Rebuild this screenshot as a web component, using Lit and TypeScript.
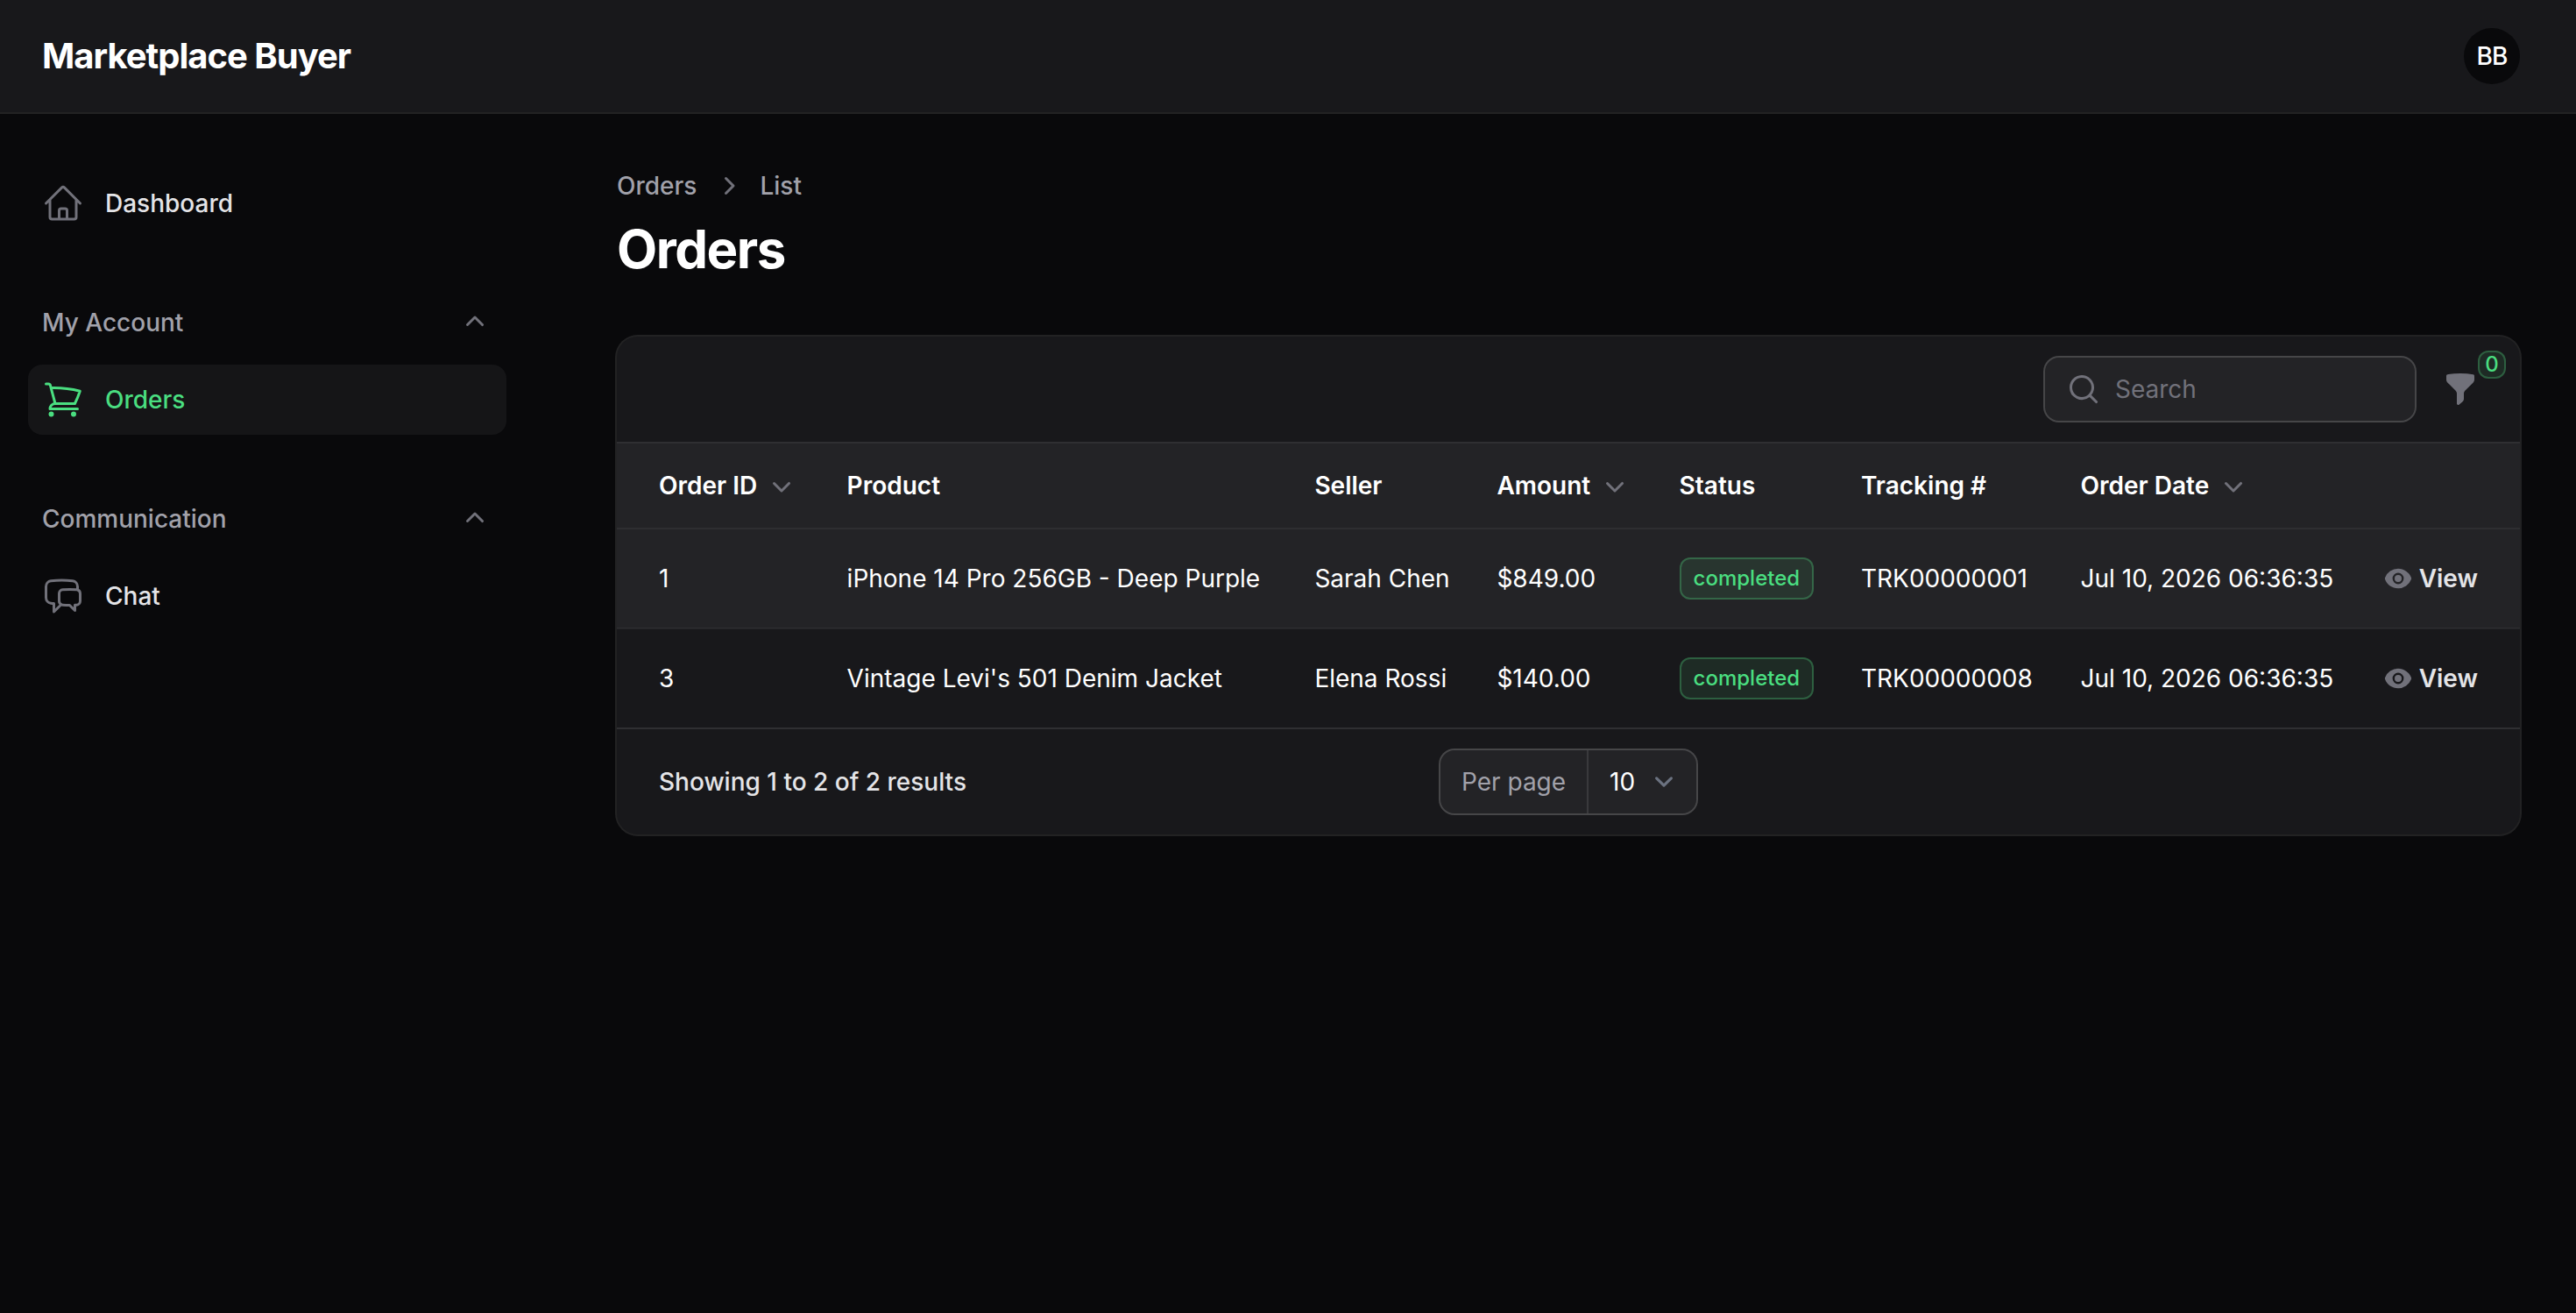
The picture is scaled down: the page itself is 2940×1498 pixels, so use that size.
import { LitElement, html, svg, css } from "lit";
import { customElement } from "lit/decorators.js";

interface Order {
  id: string;
  product: string;
  seller: string;
  amount: string;
  status: string;
  tracking: string;
  date: string;
  active: boolean;
}

const orders: Order[] = [
  {
    id: "1",
    product: "iPhone 14 Pro 256GB - Deep Purple",
    seller: "Sarah Chen",
    amount: "$849.00",
    status: "completed",
    tracking: "TRK00000001",
    date: "Jul 10, 2026 06:36:35",
    active: true,
  },
  {
    id: "3",
    product: "Vintage Levi's 501 Denim Jacket",
    seller: "Elena Rossi",
    amount: "$140.00",
    status: "completed",
    tracking: "TRK00000008",
    date: "Jul 10, 2026 06:36:35",
    active: false,
  },
];

const columns = [
  { label: "Order ID", sortable: true },
  { label: "Product", sortable: false },
  { label: "Seller", sortable: false },
  { label: "Amount", sortable: true },
  { label: "Status", sortable: false },
  { label: "Tracking #", sortable: false },
  { label: "Order Date", sortable: true },
];

const outline = (d: string) => html`<svg class="icon lg" viewBox="0 0 24 24" fill="none" stroke="currentColor"
  stroke-width="1.5" stroke-linecap="round" stroke-linejoin="round">${svg`<path d=${d}></path>`}</svg>`;

const solid = (d: string, size = "md") => html`<svg class="icon ${size}" viewBox="0 0 20 20"
  fill="currentColor">${svg`<path fill-rule="evenodd" clip-rule="evenodd" d=${d}></path>`}</svg>`;

const HOME =
  "m2.25 12 8.954-8.955c.44-.439 1.152-.439 1.591 0L21.75 12M4.5 9.75v10.125c0 .621.504 1.125 1.125 1.125H9.75v-4.875c0-.621.504-1.125 1.125-1.125h2.25c.621 0 1.125.504 1.125 1.125V21h4.125c.621 0 1.125-.504 1.125-1.125V9.75M8.25 21h8.25";
const CART =
  "M2.25 3h1.386c.51 0 .955.343 1.087.835l.383 1.437M7.5 14.25a3 3 0 0 0-3 3h15.75m-12.75-3h11.218c1.121-2.3 2.1-4.684 2.924-7.138a60.114 60.114 0 0 0-16.536-1.84M7.5 14.25 5.106 5.272M6 20.25a.75.75 0 1 1-1.5 0 .75.75 0 0 1 1.5 0Zm12.75 0a.75.75 0 1 1-1.5 0 .75.75 0 0 1 1.5 0Z";
const CHAT =
  "M20.25 8.511c.884.284 1.5 1.128 1.5 2.097v4.286c0 1.136-.847 2.1-1.98 2.193-.34.027-.68.052-1.02.072v3.091l-3-3c-1.354 0-2.694-.055-4.02-.163a2.115 2.115 0 0 1-.825-.242m9.345-8.334a2.126 2.126 0 0 0-.476-.095 48.64 48.64 0 0 0-8.048 0c-1.131.094-1.976 1.057-1.976 2.192v4.286c0 .837.46 1.58 1.155 1.951m9.345-8.334V6.637c0-1.621-1.152-3.026-2.76-3.235A48.455 48.455 0 0 0 11.25 3c-2.115 0-4.198.137-6.24.402-1.608.209-2.76 1.614-2.76 3.235v6.226c0 1.621 1.152 3.026 2.76 3.235.577.075 1.157.14 1.74.194V21l4.155-4.155";
const CHEVRON_UP =
  "M9.47 6.47a.75.75 0 0 1 1.06 0l4.25 4.25a.75.75 0 1 1-1.06 1.06L10 8.06l-3.72 3.72a.75.75 0 0 1-1.06-1.06l4.25-4.25Z";
const CHEVRON_DOWN =
  "M5.22 8.22a.75.75 0 0 1 1.06 0L10 11.94l3.72-3.72a.75.75 0 1 1 1.06 1.06l-4.25 4.25a.75.75 0 0 1-1.06 0L5.22 9.28a.75.75 0 0 1 0-1.06Z";
const CHEVRON_RIGHT =
  "M8.22 5.22a.75.75 0 0 1 1.06 0l4.25 4.25a.75.75 0 0 1 0 1.06l-4.25 4.25a.75.75 0 0 1-1.06-1.06L11.94 10 8.22 6.28a.75.75 0 0 1 0-1.06Z";
const SEARCH =
  "M9 3.5a5.5 5.5 0 1 0 0 11 5.5 5.5 0 0 0 0-11ZM2 9a7 7 0 1 1 12.452 4.391l3.328 3.329a.75.75 0 1 1-1.06 1.06l-3.329-3.328A7 7 0 0 1 2 9Z";
const FUNNEL =
  "M2.628 1.601C5.028 1.206 7.49 1 10 1s4.973.206 7.372.601a.75.75 0 0 1 .628.74v2.288a2.25 2.25 0 0 1-.659 1.59l-4.682 4.683a2.25 2.25 0 0 0-.659 1.59v3.037c0 .684-.31 1.33-.844 1.757l-1.937 1.55A.75.75 0 0 1 8 18.25v-5.757a2.25 2.25 0 0 0-.659-1.591L2.659 6.22A2.25 2.25 0 0 1 2 4.629V2.34a.75.75 0 0 1 .628-.74Z";
const EYE =
  "M10 12.5a2.5 2.5 0 1 0 0-5 2.5 2.5 0 0 0 0 5ZM.664 10.59a1.651 1.651 0 0 1 0-1.186A10.004 10.004 0 0 1 10 3c4.257 0 7.893 2.66 9.336 6.41.147.381.146.804 0 1.186A10.004 10.004 0 0 1 10 17c-4.257 0-7.893-2.66-9.336-6.41ZM14 10a4 4 0 1 1-8 0 4 4 0 0 1 8 0Z";

@customElement("app-root")
export class AppRoot extends LitElement {
  static styles = css`
    :host {
      display: flex;
      flex-direction: column;
      box-sizing: border-box;
      min-height: 100vh;
      background: #09090b;
      color: #fff;
      font-family: Inter, "Liberation Sans", sans-serif;
      font-size: 28px;
      line-height: 40px;
      -webkit-font-smoothing: antialiased;
    }
    * {
      box-sizing: border-box;
    }
    .icon {
      display: block;
      flex: none;
      color: #71717a;
    }
    .sm {
      width: 32px;
      height: 32px;
    }
    .md {
      width: 40px;
      height: 40px;
    }
    .lg {
      width: 48px;
      height: 48px;
    }
    .topbar {
      display: flex;
      align-items: center;
      justify-content: space-between;
      height: 128px;
      padding: 0 64px 0 48px;
      background: #18181b;
      box-shadow: 0 0 0 2px rgba(255, 255, 255, 0.1);
    }
    .brand {
      font-size: 40px;
      font-weight: 700;
      letter-spacing: -0.025em;
    }
    .avatar {
      display: flex;
      align-items: center;
      justify-content: center;
      width: 64px;
      height: 64px;
      border-radius: 50%;
      background: #09090b;
      font-size: 28px;
      font-weight: 500;
      letter-spacing: -0.03em;
    }
    .body {
      display: flex;
      flex: 1;
    }
    .sidebar {
      display: flex;
      flex-direction: column;
      gap: 56px;
      width: 640px;
      padding: 64px 62px 64px 32px;
    }
    .group {
      display: flex;
      flex-direction: column;
      gap: 8px;
    }
    .group-head,
    .item {
      display: flex;
      align-items: center;
      height: 80px;
      padding: 16px;
      font-weight: 500;
    }
    .group-head {
      justify-content: space-between;
      color: #a1a1aa;
    }
    .item {
      gap: 24px;
      border-radius: 16px;
      color: #e4e4e7;
    }
    .item.active {
      background: rgba(255, 255, 255, 0.05);
      color: #4ade80;
    }
    .item.active .icon {
      color: #4ade80;
    }
    .main {
      flex: 1;
      min-width: 0;
      padding: 64px;
    }
    .crumbs {
      display: flex;
      gap: 16px;
      font-weight: 500;
      color: #a1a1aa;
    }
    .title {
      margin: 16px 0 64px;
      font-size: 60px;
      line-height: 72px;
      font-weight: 700;
      letter-spacing: -0.025em;
    }
    .card {
      border-radius: 24px;
      background: #18181b;
      box-shadow: 0 0 0 2px rgba(255, 255, 255, 0.1);
    }
    .toolbar {
      display: flex;
      justify-content: flex-end;
      align-items: center;
      gap: 32px;
      padding: 24px 48px;
    }
    .search {
      display: flex;
      align-items: center;
      gap: 16px;
      width: 422px;
      height: 72px;
      padding: 0 24px;
      border-radius: 16px;
      background: rgba(255, 255, 255, 0.05);
      box-shadow: 0 0 0 2px rgba(255, 255, 255, 0.2);
      color: #71717a;
    }
    .filter {
      position: relative;
    }
    .count {
      position: absolute;
      top: -24px;
      left: 40px;
      width: 32px;
      height: 32px;
      border-radius: 12px;
      text-align: center;
      font-size: 24px;
      line-height: 32px;
      font-weight: 500;
    }
    .count,
    .badge {
      color: #4ade80;
      background: rgba(84, 216, 128, 0.1);
      box-shadow: inset 0 0 0 2px rgba(84, 216, 128, 0.3);
    }
    .row {
      display: grid;
      grid-template-columns: 214.6px 533.8px 208px 208.2px 207.4px 250.6px 345px 1fr;
      align-items: center;
      height: 114px;
      padding: 0 48px;
      border-top: 2px solid rgba(255, 255, 255, 0.05);
      white-space: nowrap;
    }
    .row.head {
      height: 98px;
      font-weight: 600;
      border-top-color: rgba(255, 255, 255, 0.1);
      background-clip: padding-box;
    }
    .row.head,
    .row.hover {
      background-color: rgba(255, 255, 255, 0.05);
    }
    .row.hover {
      box-shadow: 0 1px 0 rgba(255, 255, 255, 0.05);
    }
    .sort {
      display: flex;
      align-items: center;
      gap: 8px;
    }
    .badge {
      justify-self: start;
      height: 48px;
      padding: 0 16px;
      border-radius: 12px;
      font-size: 24px;
      line-height: 48px;
      font-weight: 500;
    }
    .view {
      display: flex;
      align-items: center;
      justify-content: flex-end;
      gap: 8px;
      font-weight: 600;
      color: #e4e4e7;
    }
    .footer {
      display: grid;
      grid-template-columns: 1fr auto 1fr;
      align-items: center;
      padding: 24px 48px;
      border-top: 2px solid rgba(255, 255, 255, 0.1);
    }
    .summary {
      font-weight: 500;
      color: #e4e4e7;
    }
    .perpage {
      display: flex;
      width: 292px;
      height: 72px;
      border-radius: 16px;
      background: rgba(255, 255, 255, 0.05);
      box-shadow: 0 0 0 2px rgba(255, 255, 255, 0.2);
      line-height: 72px;
    }
    .perpage-label {
      padding: 0 24px;
      border-right: 2px solid rgba(255, 255, 255, 0.1);
      color: #a1a1aa;
    }
    .select {
      display: flex;
      flex: 1;
      align-items: center;
      justify-content: space-between;
      padding: 0 16px 0 24px;
    }
    .caret {
      width: 42px;
      height: 42px;
    }
  `;

  private group(label: string, item: unknown) {
    return html`<div class="group">
      <div class="group-head"><span>${label}</span>${solid(CHEVRON_UP)}</div>
      ${item}
    </div>`;
  }

  render() {
    return html`
      <header class="topbar">
        <div class="brand">Marketplace Buyer</div>
        <div class="avatar">BB</div>
      </header>
      <div class="body">
        <nav class="sidebar">
          <div class="item">${outline(HOME)}<span>Dashboard</span></div>
          ${this.group("My Account", html`<div class="item active">${outline(CART)}<span>Orders</span></div>`)}
          ${this.group("Communication", html`<div class="item">${outline(CHAT)}<span>Chat</span></div>`)}
        </nav>
        <main class="main">
          <div class="crumbs"><span>Orders</span>${solid(CHEVRON_RIGHT)}<span>List</span></div>
          <h1 class="title">Orders</h1>
          <section class="card">
            <div class="toolbar">
              <div class="search">${solid(SEARCH)}<span>Search</span></div>
              <div class="filter">${solid(FUNNEL)}<span class="count">0</span></div>
            </div>
            <div class="row head">
              ${columns.map((c) => html`<div class="sort"><span>${c.label}</span>${c.sortable ? solid(CHEVRON_DOWN) : ""}</div>`)}
            </div>
            ${orders.map(
              (o) => html`<div class="row ${o.active ? "hover" : ""}">
                <span>${o.id}</span>
                <span>${o.product}</span>
                <span>${o.seller}</span>
                <span>${o.amount}</span>
                <span class="badge">${o.status}</span>
                <span>${o.tracking}</span>
                <span>${o.date}</span>
                <span class="view">${solid(EYE, "sm")}<span>View</span></span>
              </div>`
            )}
            <div class="footer">
              <span class="summary">Showing 1 to 2 of 2 results</span>
              <div class="perpage">
                <span class="perpage-label">Per page</span>
                <span class="select"><span>10</span>
                  <svg class="caret" viewBox="0 0 20 20" fill="none" stroke="#6b7280" stroke-width="1.5"
                    stroke-linecap="round" stroke-linejoin="round"><path d="m6 8 4 4 4-4"></path></svg>
                </span>
              </div>
            </div>
          </section>
        </main>
      </div>
    `;
  }
}
